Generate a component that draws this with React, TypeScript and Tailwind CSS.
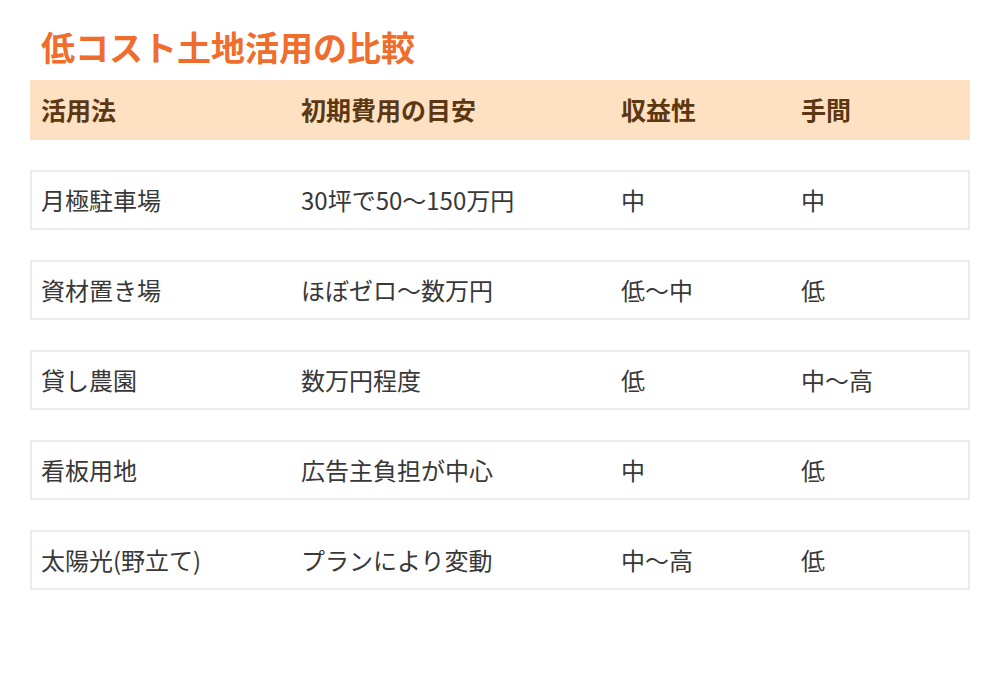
import React from "react";

const rows = [
  ["月極駐車場", "30坪で50〜150万円", "中", "中"],
  ["資材置き場", "ほぼゼロ〜数万円", "低〜中", "低"],
  ["貸し農園", "数万円程度", "低", "中〜高"],
  ["看板用地", "広告主負担が中心", "中", "低"],
  ["太陽光(野立て)", "プランにより変動", "中〜高", "低"],
];

const cols = "grid grid-cols-[260px_320px_180px_180px]";

export default function App() {
  return (
    <div
      className="w-[1000px] h-[700px] bg-white px-[30px] pt-[24px]"
      style={{ fontFamily: '"Noto Sans CJK JP", "Noto Sans", sans-serif' }}
    >
      <h1 className="pl-[11px] text-[34px] leading-[46px] font-bold text-[#ef6d2d] h-[56px]">
        低コスト土地活用の比較
      </h1>
      <div className={`${cols} h-[60px] items-center bg-[#fee0c3] text-[#5b3812] text-[25px] font-bold`}>
        <div className="pl-[11px]">活用法</div>
        <div className="pl-[11px]">初期費用の目安</div>
        <div className="pl-[11px]">収益性</div>
        <div className="pl-[11px]">手間</div>
      </div>
      <div className="flex flex-col gap-[30px] mt-[30px]">
        {rows.map((r, i) => (
          <div
            key={i}
            className={`${cols} h-[60px] items-center border-2 border-[#ececec] text-[#383838] text-[24px]`}
          >
            {r.map((c, j) => (
              <div key={j} className="pl-[9px]">
                {c}
              </div>
            ))}
          </div>
        ))}
      </div>
    </div>
  );
}
